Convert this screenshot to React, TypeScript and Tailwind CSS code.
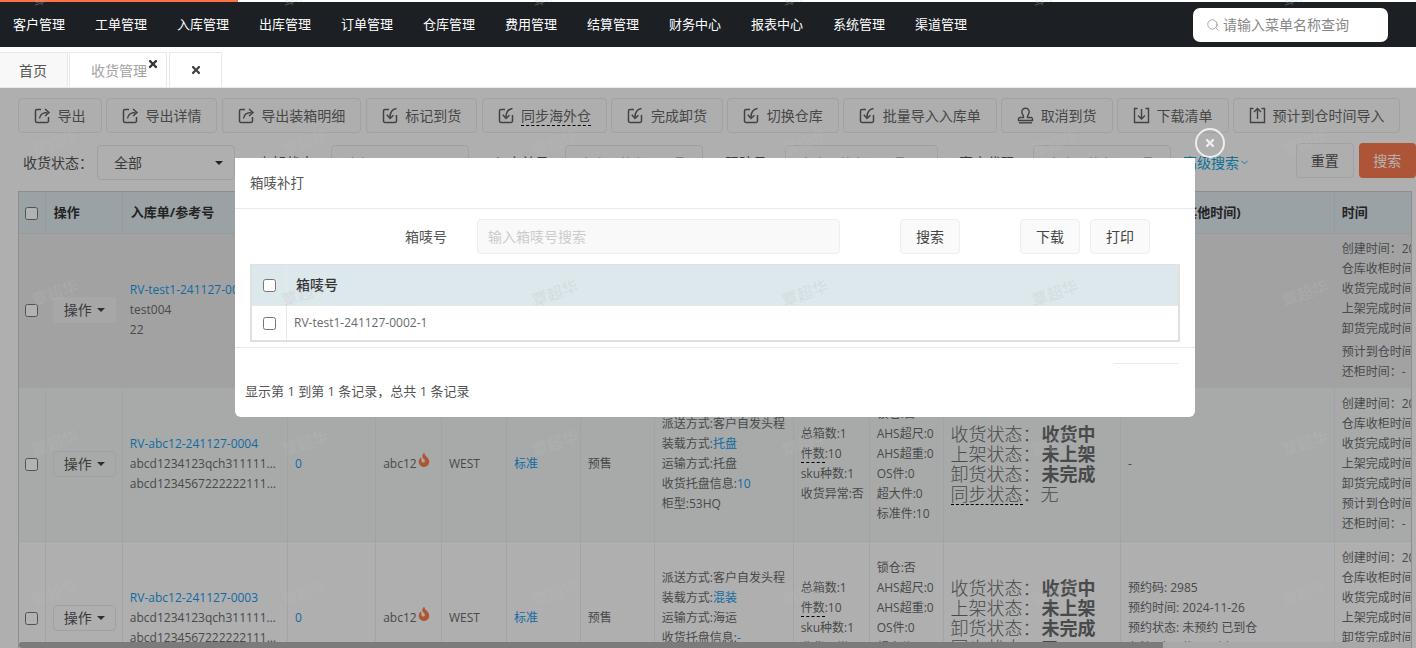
import React from "react";
import { FaFire, FaTimes } from "react-icons/fa";
import { ChevronDown, Search } from "lucide-react";

const font = { fontFamily: '"Open Sans", "Noto Sans CJK SC", sans-serif' };

function ExportIcon() {
  return (
    <svg width="17" height="17" viewBox="0 0 17 17" fill="none" stroke="#5f5f5f" strokeWidth="1.5">
      <path d="M7 2.5H3a1.5 1.5 0 0 0-1.5 1.5v10A1.5 1.5 0 0 0 3 15.5h10a1.5 1.5 0 0 0 1.5-1.5v-4" />
      <path d="M5.5 11.5c.5-4 3-6 8-6" />
      <path d="M11 2l4 3.5-4 3.5" />
    </svg>
  );
}
function CheckinIcon() {
  return (
    <svg width="17" height="17" viewBox="0 0 17 17" fill="none" stroke="#5f5f5f" strokeWidth="1.5">
      <path d="M7 2.5H3a1.5 1.5 0 0 0-1.5 1.5v10A1.5 1.5 0 0 0 3 15.5h10a1.5 1.5 0 0 0 1.5-1.5V8" />
      <path d="M14.5 1.5c-4 .5-6.500 3-6.500 9" />
      <path d="M4.800 7.800L8 11.500l3.500-3.200" />
    </svg>
  );
}
function StampIcon() {
  return (
    <svg width="17" height="17" viewBox="0 0 17 17" fill="none" stroke="#5f5f5f" strokeWidth="1.4">
      <path d="M6.500 9.500c0-1.500-1.700-2.500-1.700-4.600a3.700 3.700 0 0 1 7.400 0c0 2.100-1.700 3.100-1.700 4.600v1H14a1.500 1.500 0 0 1 1.500 1.500v1.500h-14V12A1.500 1.500 0 0 1 3 10.500h3.500z" />
      <path d="M2 15.800h13" />
    </svg>
  );
}
function DownIcon() {
  return (
    <svg width="17" height="17" viewBox="0 0 17 17" fill="none" stroke="#5f5f5f" strokeWidth="1.4">
      <path d="M4.500 1.500H1.500v14h14v-14h-3" />
      <path d="M8.500 2v9.500M5 8.500l3.500 3.500L12 8.500" />
    </svg>
  );
}
function UpIcon() {
  return (
    <svg width="17" height="17" viewBox="0 0 17 17" fill="none" stroke="#5f5f5f" strokeWidth="1.4">
      <path d="M4.500 1.500H1.500v14h14v-14h-3" />
      <path d="M8.500 12V1.500M5 5l3.500-3.500L12 5" />
    </svg>
  );
}

const navItems = ["客户管理", "工单管理", "入库管理", "出库管理", "订单管理", "仓库管理", "费用管理", "结算管理", "财务中心", "报表中心", "系统管理", "渠道管理"];

function Dashed({ children }: { children: React.ReactNode }) {
  return <span className="border-b border-dashed border-black">{children}</span>;
}

function Blue({ children }: { children: React.ReactNode }) {
  return <span className="text-[#1899e8]">{children}</span>;
}

function Caret({ color = "border-t-[#444]" }: { color?: string }) {
  return <span className={`inline-block w-0 h-0 border-x-[4px] border-x-transparent border-t-[4px] ${color}`} />;
}

function Status({ last }: { last: React.ReactNode }) {
  return (
    <div className="text-[18px] leading-[20px] font-light">
      <div>收货状态：<b className="font-bold ml-[1px]">收货中</b></div>
      <div>上架状态：<b className="font-bold ml-[1px]">未上架</b></div>
      <div>卸货状态：<b className="font-bold ml-[1px]">未完成</b></div>
      <div>{last}</div>
    </div>
  );
}

function TimeCol({ row1 }: { row1?: boolean }) {
  return (
    <div>
      <div>创建时间：2024-11-27 10:20:11</div>
      <div>仓库收柜时间：-</div>
      <div>收货完成时间：-</div>
      <div>上架完成时间：-</div>
      <div>卸货完成时间：-</div>
      <div className={row1 ? "mt-[3px]" : ""}>预计到仓时间：2024-11-30</div>
      <div>还柜时间：-</div>
    </div>
  );
}

function Row({
  bg, rv, ref1, ref2, pallet, load, ship, last, opBorder, reservation, locked, exception,
}: {
  bg: string; rv: string; ref1: string; ref2: string; pallet: string; load: string; ship: string;
  last: boolean; opBorder: string; reservation: React.ReactNode; locked: boolean; exception: boolean;
}) {
  const td = "border-r border-b border-[#e7eaec] px-[7px] align-middle overflow-hidden whitespace-nowrap";
  return (
    <tr className={`h-[154px] ${bg}`}>
      <td className="border-r border-b border-[#e7eaec] text-center align-middle">
        <input type="checkbox" className="w-[13px] h-[13px] align-middle" />
      </td>
      <td className={td}>
        <span className={`flex items-center justify-center gap-[5px] w-[63px] h-[26px] rounded-[4px] text-[14px] text-[#555] ${opBorder}`}>
          操作 <Caret />
        </span>
      </td>
      <td className={td}>
        <div className="text-[#1899e8]">{rv}</div>
        <div className="truncate">{ref1}</div>
        <div className="truncate">{ref2}</div>
      </td>
      <td className={td}><Blue>0</Blue></td>
      <td className={td}>
        <span className="inline-flex items-start">abc12<FaFire className="text-[#f97a4e] text-[14px] -mt-[1px]" /></span>
      </td>
      <td className={td}>WEST</td>
      <td className={td}><Blue>标准</Blue></td>
      <td className={td}>预售</td>
      <td className={td}>
        <div>派送方式:客户自发头程</div>
        <div>装载方式:<Blue>{load}</Blue></div>
        <div>运输方式:{ship}</div>
        <div>收货托盘信息:<Blue>{pallet}</Blue></div>
        <div>柜型:53HQ</div>
      </td>
      <td className={td}>
        <div>总箱数:1</div>
        <div><Dashed>件数</Dashed>:10</div>
        <div>sku种数:1</div>
        <div>收货异常:{exception ? "是" : "否"}</div>
      </td>
      <td className={td}>
        <div>锁仓:{locked ? "是" : "否"}</div>
        <div>AHS超尺:0</div>
        <div>AHS超重:0</div>
        <div>OS件:0</div>
        <div>超大件:0</div>
        <div>标准件:10</div>
      </td>
      <td className={td}>
        <Status last={<><span className="border-b border-dashed border-black inline-block leading-[20px]">同步状态</span>：无</>} />
      </td>
      <td className={td}>{reservation}</td>
      <td className={td}><TimeCol row1={last} /></td>
    </tr>
  );
}

const tools: [React.ReactNode, React.ReactNode][] = [
  [<ExportIcon />, "导出"],
  [<ExportIcon />, "导出详情"],
  [<ExportIcon />, "导出装箱明细"],
  [<CheckinIcon />, "标记到货"],
  [<CheckinIcon />, <Dashed>同步海外仓</Dashed>],
  [<CheckinIcon />, "完成卸货"],
  [<CheckinIcon />, "切换仓库"],
  [<CheckinIcon />, "批量导入入库单"],
  [<StampIcon />, "取消到货"],
  [<DownIcon />, "下载清单"],
  [<UpIcon />, "预计到仓时间导入"],
];

function FilterInput({ label, labelW, inputW, text, gap }: { label: string; labelW: string; inputW: string; text: string; gap: string }) {
  return (
    <div className={`flex items-center h-[35px] ${gap}`}>
      <span className={`text-[14px] text-[#555] ${labelW}`}>{label}</span>
      <div className={`h-[35px] ${inputW} border border-[#e5e6e7] rounded-[4px] px-[14px] flex items-center text-[13px] text-[#aaa] bg-[#fafafa] overflow-hidden whitespace-nowrap`}>
        {text}
      </div>
    </div>
  );
}

export default function App() {
  const marks = Array.from({ length: 30 });
  return (
    <div style={font} className="relative w-[1416px] h-[648px] overflow-hidden bg-white">
      {/* top strip */}
      <div className="h-[2px] flex">
        <div className="w-[238px] bg-[#ff7043]" />
      </div>
      {/* nav */}
      <div className="h-[45px] bg-[#1c2025] flex items-center justify-between pr-[28px]">
        <div className="flex">
          {navItems.map((n) => (
            <span key={n} className="w-[82px] pl-[13px] text-[13px] text-white whitespace-nowrap">{n}</span>
          ))}
        </div>
        <div className="w-[195px] h-[34px] bg-white rounded-[7px] flex items-center pl-[13px] gap-[3px] text-[14px] text-[#888]">
          <Search size={14} className="text-[#999]" strokeWidth={1.5} />
          请输入菜单名称查询
        </div>
      </div>
      {/* tabs */}
      <div className="h-[41px] flex items-end border-b border-[#e7eaec] pl-0 gap-[1px]">
        <div className="w-[68px] h-[35px] bg-[#f8f8f8] border-r border-t border-[#e7eaec] flex items-center pl-[19px] text-[14px] text-[#555]">首页</div>
        <div className="relative w-[98px] h-[35px] bg-white border border-b-0 border-[#e7eaec] flex items-center pl-[21px] text-[14px] text-[#a3a3a3]">
          收货管理
          <FaTimes className="absolute right-[7px] top-[5px] text-[12px] text-[#333]" />
        </div>
        <div className="w-[53px] h-[35px] bg-white border border-b-0 border-[#e7eaec] flex items-center justify-center ml-[1px]">
          <FaTimes className="text-[12px] text-[#444]" />
        </div>
      </div>
      {/* content */}
      <div className="relative h-[560px] bg-[#fbfbfb] flex flex-col text-[12px] leading-[20px] text-[#676a6c]">
        <div className="flex pl-[18px] pt-[10px] gap-[4.4px]">
          {tools.map(([icon, label], i) => (
            <div key={i} className="h-[35px] px-[15px] flex items-center gap-[6.5px] border border-[#e5e6ee] rounded-[4px] bg-[#fafafa] text-[14px] text-[#666] whitespace-nowrap">
              {icon}
              <span>{label}</span>
            </div>
          ))}
        </div>
        <div className="relative flex pl-[23px] mt-[10px] h-[48px]">
          <div className="flex items-center h-[35px] mt-[2px]">
            <span className="text-[14px] text-[#555] w-[74px]">收货状态：</span>
            <div className="w-[138px] h-[35px] border border-[#e5e6e7] rounded-[4px] pl-[16px] pr-[11px] flex items-center justify-between text-[14px] text-[#555]">
              全部 <Caret color="border-t-[#333]" />
            </div>
          </div>
          <div className="mt-[2px] flex">
            <FilterInput gap="ml-[23px]" labelW="w-[73px]" inputW="w-[138px]" label="上架状态" text="全部" />
            <FilterInput gap="ml-[24px]" labelW="w-[72px]" inputW="w-[138px]" label="入库单号" text="多个用英文逗号隔开" />
            <FilterInput gap="ml-[22px]" labelW="w-[60px]" inputW="w-[153px]" label="跟踪号" text="多个用英文逗号隔开" />
            <FilterInput gap="ml-[21px]" labelW="w-[74px]" inputW="w-[138px]" label="客户代码" text="多个用英文逗号隔开" />
          </div>
          <div className="mt-[2px] ml-[12px] h-[35px] flex items-center text-[14px] text-[#13a5dc] whitespace-nowrap">
            高级搜索<ChevronDown size={11} />
          </div>
          <div className="ml-[46px] w-[60px] h-[35px] border border-[#e5e6ee] rounded-[4px] flex items-center justify-center text-[14px] text-[#555] bg-[#fafafa]">重置</div>
          <div className="ml-[5px] w-[60px] h-[35px] rounded-[4px] flex items-center justify-center text-[14px] text-white bg-[#fb7a4f]">搜索</div>
        </div>
        {/* table */}
        <div className="relative ml-[18px] w-[1394px] flex-1 overflow-hidden border-l border-t border-r border-[#ccc]">
          <table className="table-fixed border-collapse w-[1481px]">
            <colgroup>
              <col className="w-[26px]" />
              <col className="w-[76px]" />
              <col className="w-[163px]" />
              <col className="w-[87px]" />
              <col className="w-[65px]" />
              <col className="w-[64px]" />
              <col className="w-[73px]" />
              <col className="w-[73px]" />
              <col className="w-[137px]" />
              <col className="w-[75px]" />
              <col className="w-[73px]" />
              <col className="w-[175px]" />
              <col className="w-[211px]" />
              <col className="w-[163px]" />
            </colgroup>
            <thead>
              <tr className="h-[41px] bg-[#dde8ed] text-[13px] font-bold text-[#333] whitespace-nowrap text-left">
                <th className="border-r border-b border-[#d4dde2] text-center"><input type="checkbox" className="w-[13px] h-[13px] align-middle" /></th>
                <th className="border-r border-b border-[#d4dde2] px-[8px] font-bold">操作</th>
                <th className="border-r border-b border-[#d4dde2] px-[8px] font-bold">入库单/参考号</th>
                <th className="border-r border-b border-[#d4dde2] px-[7px] font-bold">数量</th>
                <th className="border-r border-b border-[#d4dde2] px-[7px] font-bold">客户</th>
                <th className="border-r border-b border-[#d4dde2] px-[7px] font-bold">仓库</th>
                <th className="border-r border-b border-[#d4dde2] px-[7px] font-bold">类型</th>
                <th className="border-r border-b border-[#d4dde2] px-[7px] font-bold">业务</th>
                <th className="border-r border-b border-[#d4dde2] px-[7px] font-bold">物流信息</th>
                <th className="border-r border-b border-[#d4dde2] px-[7px] font-bold">箱数</th>
                <th className="border-r border-b border-[#d4dde2] px-[7px] font-bold">属性</th>
                <th className="border-r border-b border-[#d4dde2] px-[7px] font-bold">状态</th>
                <th className="border-r border-b border-[#d4dde2] px-[7px] font-bold">预约信息(其他时间)</th>
                <th className="border-r border-b border-[#d4dde2] px-[7px] font-bold">时间</th>
              </tr>
            </thead>
            <tbody>
              <Row bg="bg-[#e8e9ea]" rv="RV-test1-241127-0002" ref1="test004" ref2="22" pallet="10" load="托盘" ship="托盘" last opBorder="bg-[#f0f0f0]" reservation="-" locked={false} exception={false} />
              <Row bg="bg-[#f1f4f3]" rv="RV-abc12-241127-0004" ref1="abcd1234123qch31111111111" ref2="abcd123456722222211111111" pallet="10" load="托盘" ship="托盘" last={false} opBorder="border border-[#e5e6ee]" reservation="-" locked={false} exception={false} />
              <Row bg="bg-[#fbfbfb]" rv="RV-abc12-241127-0003" ref1="abcd1234123qch31111111111" ref2="abcd123456722222211111111" pallet="-" load="混装" ship="海运" last={false} opBorder="border border-[#e5e6ee]" reservation={
                <div>
                  <div>预约码: 2985</div>
                  <div>预约时间: 2024-11-26</div>
                  <div>预约状态: 未预约 已到仓</div>
                  <div>备注: 未预约 已到仓</div>
                </div>
              } locked={false} exception={false} />
            </tbody>
          </table>
          <div className="absolute left-0 right-0 bottom-0 h-[6px] bg-[#f1f1f1]">
            <div className="w-[1144px] h-full bg-[#b1b1b1] rounded-l-[3px]" />
          </div>
        </div>

        {/* mask */}
        <div className="absolute inset-0 bg-black/30" />
        {/* modal */}
        <div className="absolute left-[235px] top-[70px] w-[960px] h-[259px] bg-white rounded-b-[6px] flex flex-col text-[#676a6c]">
          <div className="h-[51px] border-b border-[#e7eaec] pl-[15px] flex items-center text-[13.500px] text-[#555]">箱唛补打</div>
          <div className="flex items-center h-[35px] mt-[10px] text-[14px]">
            <span className="ml-[170px] w-[72px] text-[#555]">箱唛号</span>
            <div className="w-[363px] h-[35px] bg-[#f9f9f9] border border-[#eeeeee] rounded-[4px] pl-[10px] flex items-center text-[#ccc]">输入箱唛号搜索</div>
            <div className="ml-[60px] w-[60px] h-[35px] bg-[#fafafa] border border-[#eeeeee] rounded-[4px] flex items-center justify-center text-[#444]">搜索</div>
            <div className="ml-[60px] w-[60px] h-[35px] bg-[#fafafa] border border-[#eeeeee] rounded-[4px] flex items-center justify-center text-[#444]">下载</div>
            <div className="ml-[10px] w-[60px] h-[35px] bg-[#fafafa] border border-[#eeeeee] rounded-[4px] flex items-center justify-center text-[#444]">打印</div>
          </div>
          <div className="mx-[15px] mt-[10px] w-[930px] border-2 border-[#e0e0e0] border-t-[1.5px]">
            <div className="h-[41px] bg-[#dde8ed] flex items-center border-b border-[#e7eaec]">
              <div className="w-[35px] h-full flex items-center justify-center border-r border-[#e7eaec]"><input type="checkbox" className="w-[13px] h-[13px]" /></div>
              <span className="pl-[9px] text-[14px] font-medium text-[#333]">箱唛号</span>
            </div>
            <div className="h-[34px] flex items-center">
              <div className="w-[35px] h-full flex items-center justify-center border-r border-[#e7eaec]"><input type="checkbox" className="w-[13px] h-[13px]" /></div>
              <span className="pl-[7px] text-[12px] text-[#676a6c]">RV-test1-241127-0002-1</span>
            </div>
          </div>
          <div className="mt-[5px] border-t border-[#e7eaec]" />
          <div className="self-end mr-[17px] mt-[15px] w-[64px] border-t border-[#e7eaec]" />
          <div className="mt-[17px] pl-[10px] text-[13px] leading-[20px] text-[#555]">显示第 1 到第 1 条记录，总共 1 条记录</div>
        </div>
        {/* close */}
        <div className="absolute left-[1195px] top-[40px] w-[30px] h-[30px] rounded-full border-2 border-[#eeeeee] flex items-center justify-center">
          <FaTimes className="text-[12px] text-[#eeeeee]" />
        </div>
      </div>
      {/* watermark */}
      <div className="absolute left-[-70px] top-[-82px] grid grid-cols-[repeat(6,250px)] auto-rows-[150px] pointer-events-none">
        {marks.map((_, i) => (
          <div key={i} className="flex items-center justify-center">
            <span className="-rotate-[20deg] text-[16px] text-[#bdbdbd]/30 whitespace-nowrap">覃超华</span>
          </div>
        ))}
      </div>
    </div>
  );
}
